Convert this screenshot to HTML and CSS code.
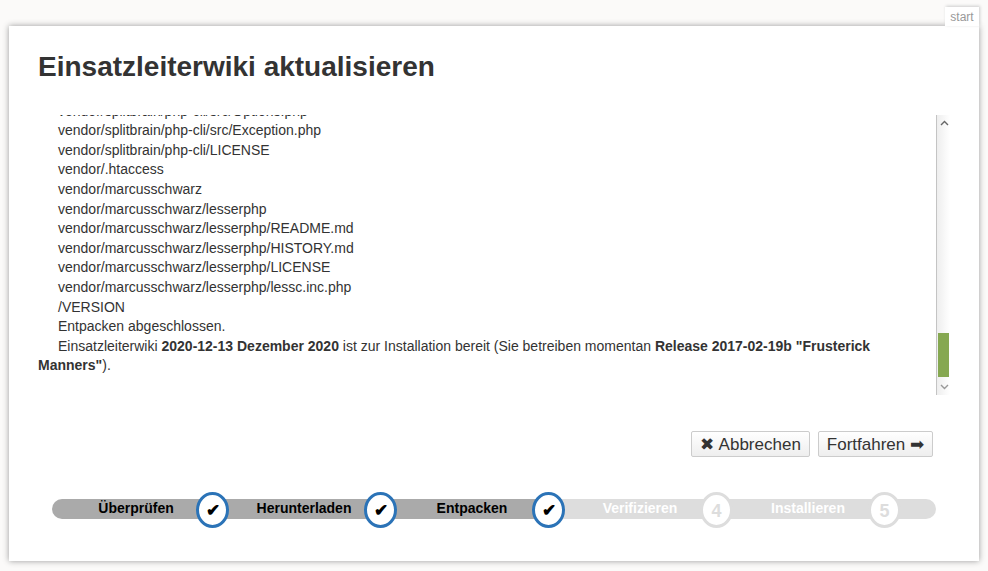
FILE: index.html
```html
<!DOCTYPE html>
<html lang="de">
<head>
<meta charset="utf-8">
<title>Einsatzleiterwiki aktualisieren</title>
<link rel="stylesheet" href="styles.css">
</head>
<body>
<div class="site">
  <nav class="tabs"><a class="tab">start</a></nav>
  <main class="panel">
    <h1 class="title">Einsatzleiterwiki aktualisieren</h1>
    <section class="logbox">
      <div class="log">
        <div class="log-inner">
          <p>vendor/splitbrain/php-cli/src/Options.php</p>
          <p>vendor/splitbrain/php-cli/src/Exception.php</p>
          <p>vendor/splitbrain/php-cli/LICENSE</p>
          <p>vendor/.htaccess</p>
          <p>vendor/marcusschwarz</p>
          <p>vendor/marcusschwarz/lesserphp</p>
          <p>vendor/marcusschwarz/lesserphp/README.md</p>
          <p>vendor/marcusschwarz/lesserphp/HISTORY.md</p>
          <p>vendor/marcusschwarz/lesserphp/LICENSE</p>
          <p>vendor/marcusschwarz/lesserphp/lessc.inc.php</p>
          <p>/VERSION</p>
          <p>Entpacken abgeschlossen.</p>
          <p>Einsatzleiterwiki <b>2020-12-13 Dezember 2020</b> ist zur Installation bereit (Sie betreiben momentan <b>Release 2017-02-19b "Frusterick Manners"</b>).</p>
        </div>
      </div>
      <div class="scrollbar">
        <svg class="arrow" width="9" height="6" viewBox="0 0 9 6"><path d="M1 5l3.5-3.5L8 5" fill="none" stroke="#666" stroke-width="1.4"/></svg>
        <div class="track"><div class="thumb"></div></div>
        <svg class="arrow" width="9" height="6" viewBox="0 0 9 6"><path d="M1 1l3.5 3.5L8 1" fill="none" stroke="#999" stroke-width="1.4"/></svg>
      </div>
    </section>
    <div class="actions">
      <button class="btn"><span class="sym sym-lead">✖</span> Abbrechen</button>
      <button class="btn">Fortfahren <span class="sym">➡</span></button>
    </div>
    <ol class="steps">
      <li class="step done first"><span class="label">Überprüfen</span><span class="dot">✔</span></li>
      <li class="step done"><span class="label">Herunterladen</span><span class="dot">✔</span></li>
      <li class="step done"><span class="label">Entpacken</span><span class="dot">✔</span></li>
      <li class="step"><span class="label">Verifizieren</span><span class="dot">4</span></li>
      <li class="step last"><span class="label">Installieren</span><span class="dot">5</span></li>
    </ol>
  </main>
</div>
</body>
</html>
```
FILE: styles.css
```css
* { box-sizing: border-box; }
html, body { margin: 0; height: 100%; }
body {
  background: #fbfaf9;
  color: #333;
  font-family: "Liberation Sans", Arial, sans-serif;
  font-size: 14px;
  line-height: 19.6px;
  overflow: hidden;
}
.site { padding: 7px 9px 0; width: 988px; }
.tabs { display: flex; justify-content: flex-end; height: 19px; }
.tab {
  position: relative;
  z-index: 1;
  width: 34px;
  height: 19px;
  background: #fff;
  color: #999;
  font-size: 12px;
  line-height: 21px;
  text-align: center;
  box-shadow: 1px -1px 3px #ccc;
}
.panel {
  position: relative;
  height: 535px;
  background: #fff;
  box-shadow: 0 0 6px #999;
  padding: 0 29px;
}
.title {
  margin: 0;
  padding-top: 23px;
  height: 89px;
  font-size: 28px;
  line-height: 36px;
  font-weight: bold;
  color: #333;
}
.logbox { display: flex; width: 912px; height: 280px; }
.log { flex: 1; overflow: hidden; }
.log-inner { margin-top: -13.4px; }
.log-inner p { margin: 0; text-indent: 20px; }
.scrollbar {
  width: 14px;
  display: flex;
  flex-direction: column;
  align-items: center;
  padding: 5px 0 5px 1px;
  border-left: 1px solid #c4c4c4;
  background: linear-gradient(to right, #eee, #fafafa 70%, #fff);
}
.arrow { display: block; flex: none; }
.track { flex: 1; width: 100%; display: flex; flex-direction: column; justify-content: flex-end; }
.thumb { height: 44px; background: #86a851; margin-right: 1px; margin-bottom: 7px; }
.actions {
  display: flex;
  justify-content: flex-end;
  gap: 8px;
  width: 895px;
  margin-top: 36px;
}
.btn {
  height: 26px;
  padding: 2px 8px 0;
  border: 1px solid #ccc;
  border-radius: 2px;
  background: linear-gradient(to bottom, #fff, #eee);
  color: #333;
  font-family: inherit;
  font-size: 17px;
  line-height: 22px;
}
.sym { font-size: 17px; }
.sym-lead { margin-right: 1px; }
.steps {
  display: flex;
  list-style: none;
  margin: 42px 0 0 14px;
  padding: 0;
  width: 884px;
  height: 20px;
}
.step {
  position: relative;
  flex: 0 0 168px;
  height: 20px;
  background: #ddd;
  color: #fff;
  font-weight: bold;
  line-height: 18px;
  text-align: center;
}
.step.done { background: #aaa; color: #000; }
.step.first { border-radius: 10px 0 0 10px; }
.step.last { flex: 0 0 212px; border-radius: 0 10px 10px 0; padding-right: 44px; }
.label { display: block; }
.dot {
  position: absolute;
  z-index: 1;
  left: 144px;
  top: -7px;
  width: 33px;
  height: 36px;
  border: 3px solid #ddd;
  border-radius: 50%;
  background: #fff;
  color: #ddd;
  font-size: 18px;
  line-height: 32px;
  font-weight: bold;
}
.step.done .dot { border-color: #2b73b7; color: #000; font-size: 17px; }
```
